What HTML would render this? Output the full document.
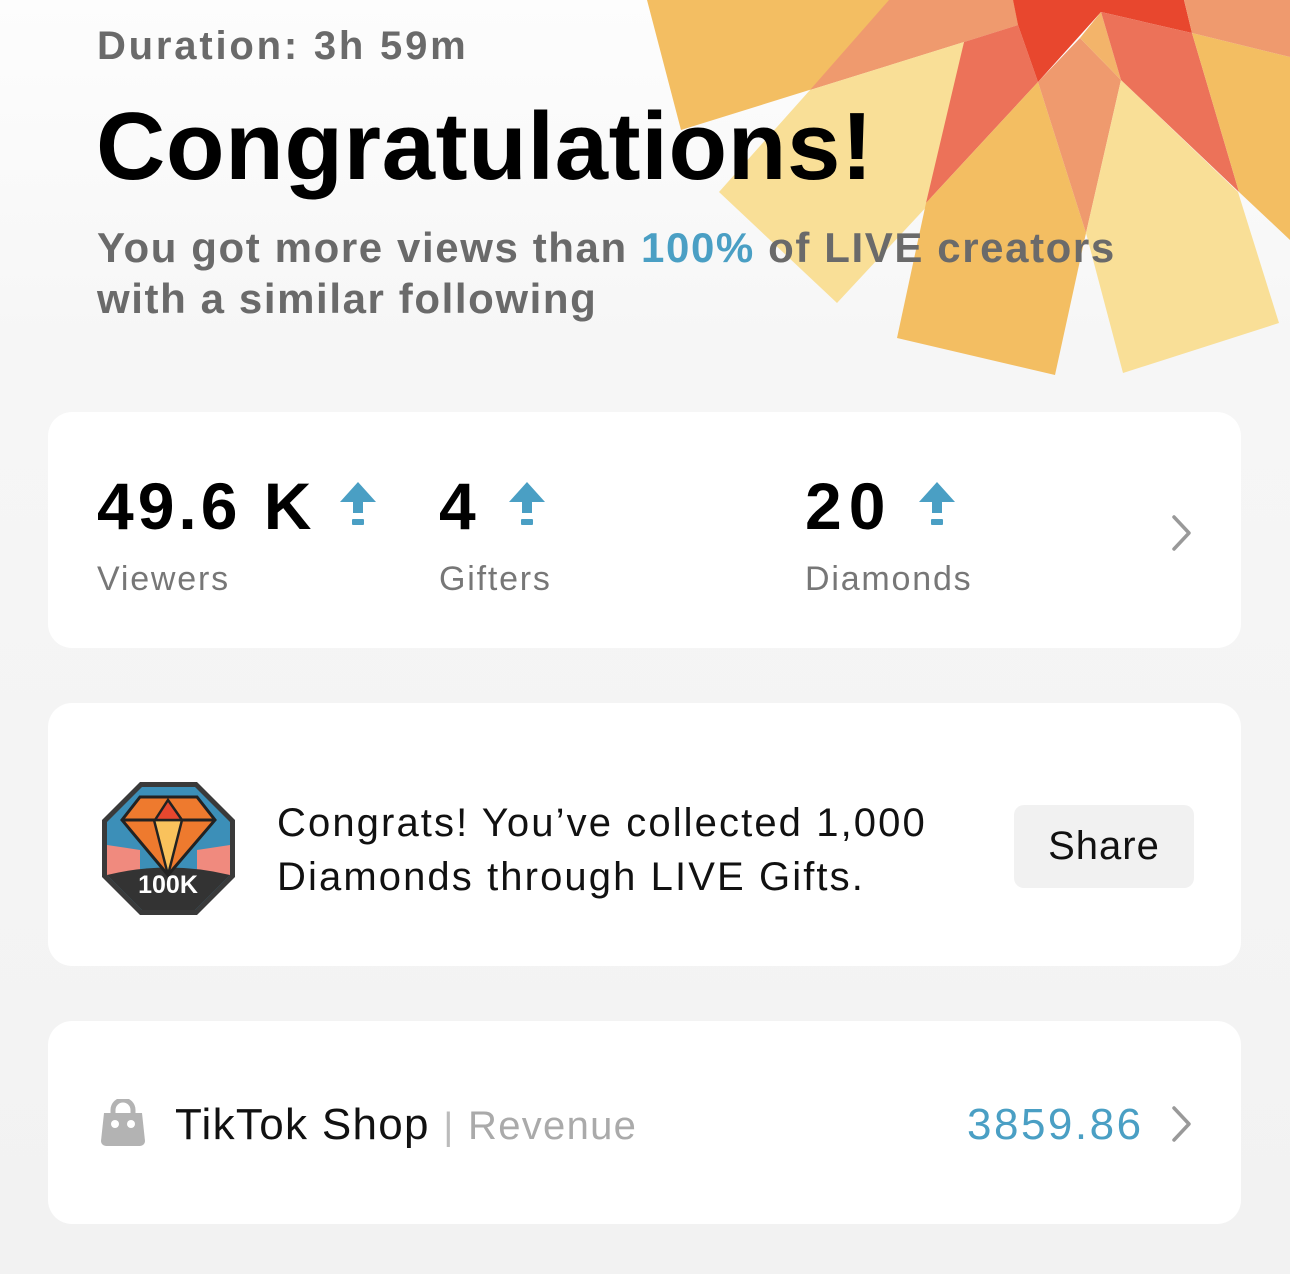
<!DOCTYPE html>
<html><head><meta charset="utf-8"><style>
*{margin:0;padding:0;box-sizing:border-box}
body{width:1290px;height:1274px;overflow:hidden;background:linear-gradient(#fdfdfd 0,#f6f6f6 350px,#f2f2f2 1274px);font-family:"Liberation Sans",sans-serif;position:relative}
.abs{position:absolute;white-space:nowrap}
.card{position:absolute;left:48px;width:1193px;background:#fff;border-radius:24px}
.arrow{position:absolute;width:36px;height:44px}
</style></head><body>
<svg class="abs" style="left:0;top:0" width="1290" height="380" viewBox="0 0 1290 380">
<polygon fill="#F3BE62" points="647,0 681,130 1018,25 1013,0"/>
<polygon fill="#EF9A6E" points="810,90 889,0 1013,0 1018,25 964,42"/>
<polygon fill="#F9DF97" points="719,192 837,303 930,203 964,42 810,90"/>
<polygon fill="#EC7259" points="964,42 1018,25 1038,82 926,203"/>
<polygon fill="#E8472E" points="1013,0 1184,0 1192,33 1101,12 1038,82 1018,25"/>
<polygon fill="#F3BE62" points="926,203 1038,82 1086,233 1055,375 897,338"/>
<polygon fill="#EF9A6E" points="1038,82 1080,38 1121,80 1086,233"/>
<polygon fill="#F3B46A" points="1080,38 1101,12 1121,80"/>
<polygon fill="#F9DF97" points="1086,233 1121,80 1238,192 1279,323 1123,373"/>
<polygon fill="#EC7259" points="1101,12 1192,33 1239,192 1121,80"/>
<polygon fill="#F3BE62" points="1192,33 1290,57 1290,240 1239,192"/>
<polygon fill="#EF9A6E" points="1184,0 1290,0 1290,57 1192,33"/>
</svg>
<div class="abs" style="left:97px;top:24px;font-size:40px;font-weight:bold;color:#6a6a6a;letter-spacing:2.8px">Duration: 3h 59m</div>
<div class="abs" style="left:96px;top:92px;font-size:96px;font-weight:bold;color:#000;letter-spacing:0.6px">Congratulations!</div>
<div class="abs" style="left:97px;top:222px;font-size:42px;font-weight:bold;color:#6a6a6a;line-height:51px;letter-spacing:1.6px">You got more views than <span style="color:#4a9fc4">100%</span> of LIVE creators<br>with a similar following</div>

<div class="card" style="top:412px;height:236px"></div>
<div class="abs" style="left:97px;top:468px;font-size:66px;font-weight:bold;letter-spacing:4px">49.6 K</div>
<div class="abs" style="left:439px;top:468px;font-size:66px;font-weight:bold">4</div>
<div class="abs" style="left:805px;top:468px;font-size:66px;font-weight:bold;letter-spacing:7px">20</div>
<svg class="arrow" style="left:340px;top:482px" viewBox="0 0 36 44"><polygon fill="#4a9fc4" points="18,0 36,20 23,20 23,31 13,31 13,20 0,20"/><rect fill="#4a9fc4" x="12" y="37" width="12" height="6" rx="1"/></svg>
<svg class="arrow" style="left:509px;top:482px" viewBox="0 0 36 44"><polygon fill="#4a9fc4" points="18,0 36,20 23,20 23,31 13,31 13,20 0,20"/><rect fill="#4a9fc4" x="12" y="37" width="12" height="6" rx="1"/></svg>
<svg class="arrow" style="left:919px;top:482px" viewBox="0 0 36 44"><polygon fill="#4a9fc4" points="18,0 36,20 23,20 23,31 13,31 13,20 0,20"/><rect fill="#4a9fc4" x="12" y="37" width="12" height="6" rx="1"/></svg>
<div class="abs" style="left:97px;top:560px;font-size:34px;color:#777;letter-spacing:1.8px">Viewers</div>
<div class="abs" style="left:439px;top:560px;font-size:34px;color:#777;letter-spacing:1.8px">Gifters</div>
<div class="abs" style="left:805px;top:560px;font-size:34px;color:#777;letter-spacing:1.8px">Diamonds</div>
<svg class="abs" style="left:1170px;top:514px" width="24" height="38" viewBox="0 0 24 38"><polyline points="4,3 19,19 4,35" fill="none" stroke="#999" stroke-width="3.5" stroke-linecap="round" stroke-linejoin="round"/></svg>

<div class="card" style="top:703px;height:263px"></div>
<svg class="abs" style="left:100px;top:780px" width="137" height="137" viewBox="0 0 137 137">
<polygon points="40,2 97,2 135,40 135,97 97,135 40,135 2,97 2,40" fill="#3a3a3a"/>
<polygon points="42,7 95,7 130,42 130,95 95,130 42,130 7,95 7,42" fill="#3c8fb8"/>
<polygon points="7,65 40,70 40,100 7,95" fill="#f08a7e"/>
<polygon points="130,65 97,70 97,100 130,95" fill="#f08a7e"/>
<path d="M7,95 Q68,80 130,95 L95,130 L42,130 Z" fill="#333"/>
<polygon points="40,17 97,17 115,40 68,95 22,40" fill="#ee7a2e" stroke="#222" stroke-width="3"/>
<polygon points="22,40 115,40" stroke="#222" stroke-width="3"/>
<polygon points="54,40 82,40 68,95" fill="#f9c25c" stroke="#222" stroke-width="2.5"/>
<polygon points="55,40 68,20 82,40" fill="#e8472e" stroke="#222" stroke-width="2.5"/>
<text x="68" y="113" text-anchor="middle" font-family="Liberation Sans" font-weight="bold" font-size="25" fill="#fff">100K</text>
</svg>
<div class="abs" style="left:277px;top:796px;font-size:40px;line-height:54px;color:#111;letter-spacing:2.1px">Congrats! You’ve collected 1,000<br>Diamonds through LIVE Gifts.</div>
<div class="abs" style="left:1014px;top:805px;width:180px;height:83px;background:#f1f1f1;border-radius:10px;font-size:40px;line-height:83px;text-align:center;color:#111;letter-spacing:1px">Share</div>

<div class="card" style="top:1021px;height:203px"></div>
<svg class="abs" style="left:100px;top:1099px" width="46" height="48" viewBox="0 0 46 48">
<path d="M13,16 V11 a10,10 0 0 1 20,0 V16" fill="none" stroke="#b3b3b3" stroke-width="5"/>
<path d="M4,14 H42 L45,42 a5,5 0 0 1 -5,5 H6 a5,5 0 0 1 -5,-5 Z" fill="#b3b3b3"/>
<circle cx="15" cy="25" r="4" fill="#fff"/><circle cx="31" cy="25" r="4" fill="#fff"/>
</svg>
<div class="abs" style="left:175px;top:1100px;font-size:44px;color:#111;letter-spacing:1.3px">TikTok Shop <span style="color:#bbb;font-size:38px">|</span> <span style="color:#aaa;font-size:40px">Revenue</span></div>
<div class="abs" style="left:967px;top:1100px;font-size:44px;color:#4a9fc4;letter-spacing:2.5px">3859.86</div>
<svg class="abs" style="left:1170px;top:1105px" width="24" height="38" viewBox="0 0 24 38"><polyline points="4,3 19,19 4,35" fill="none" stroke="#999" stroke-width="3.5" stroke-linecap="round" stroke-linejoin="round"/></svg>
</body></html>
